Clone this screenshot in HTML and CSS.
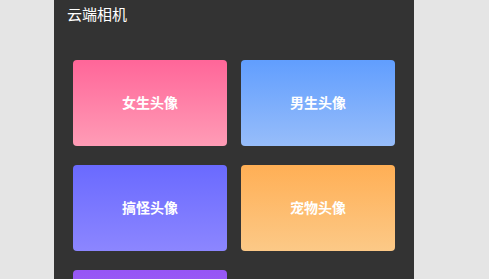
FILE: index.html
```html
<!DOCTYPE html>
<html lang="zh-CN">
<head>
    <meta charset="UTF-8">
    <meta name="viewport" content="width=device-width, initial-scale=1.0">
    <title>云端相机</title>
    <link rel="stylesheet" href="styles.css">
</head>
<body>
    <div class="app">
        <div class="header">云端相机</div>

        <!-- avatar categories -->
        <div class="grid">
            <div class="card girl">女生头像</div>
            <div class="card boy">男生头像</div>
            <div class="card funny">搞怪头像</div>
            <div class="card pet">宠物头像</div>
            <div class="card more"></div>
        </div>
    </div>
</body>
</html>
```

FILE: styles.css
```css
html, body { margin: 0; padding: 0; }
body { background: #e5e5e5; font-family: "Noto Sans CJK SC", "Noto Sans", sans-serif; height: 279px; overflow: hidden; }
.app { width: 360px; margin-left: 54px; background: #333333; min-height: 279px; }
.header { height: 30px; line-height: 28px; padding: 0 13px; color: #ffffff; font-size: 15px; }
.grid { display: grid; grid-template-columns: 154px 154px; grid-auto-rows: 86px; gap: 19px 14px; padding: 30px 19px; }
.card { border-radius: 4px; color: #ffffff; font-size: 14px; font-weight: bold; display: flex; align-items: center; justify-content: center; padding-bottom: 2px; box-sizing: border-box; }
.girl { background: linear-gradient(#ff6699, #ff9cb6); }
.boy { background: linear-gradient(#619efe, #97bdfa); }
.funny { background: linear-gradient(#6a6aff, #8c86ff); }
.pet { background: linear-gradient(#ffaf55, #fcc987); }
.more { background: linear-gradient(#9656f5, #a878f7); }
```
